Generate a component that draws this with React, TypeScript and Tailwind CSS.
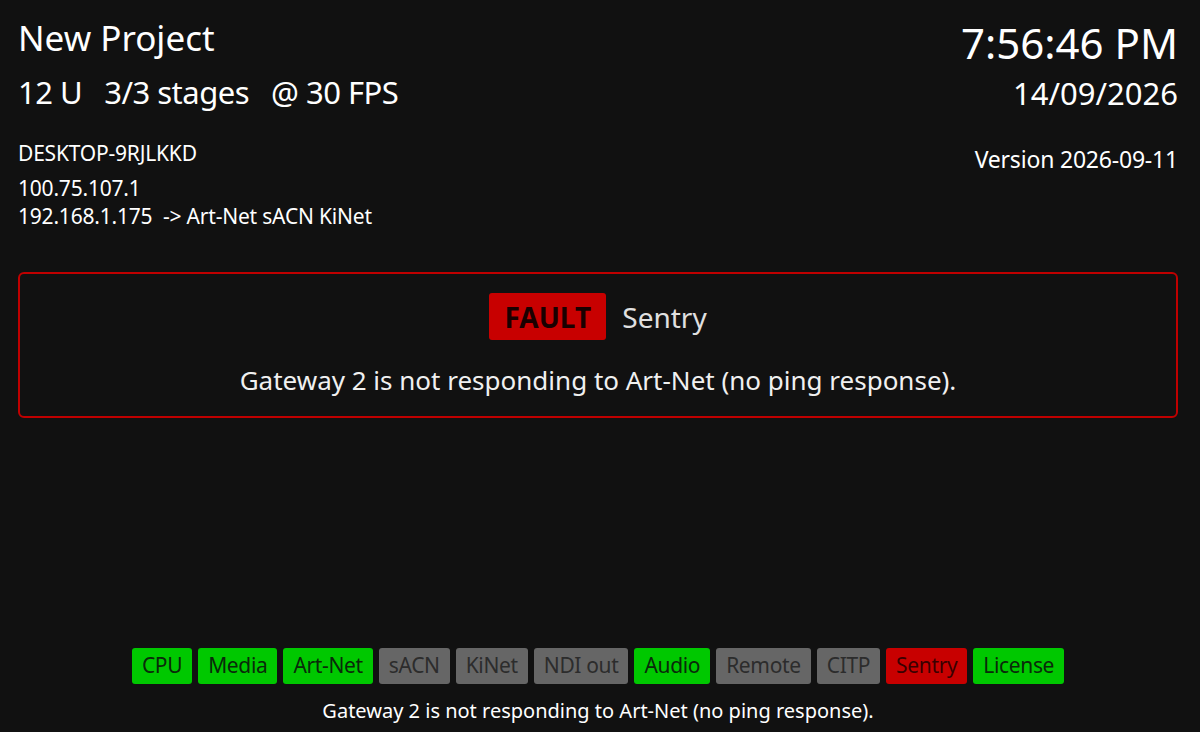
const badges: { label: string; state: 'ok' | 'off' | 'fault' }[] = [
  { label: 'CPU', state: 'ok' },
  { label: 'Media', state: 'ok' },
  { label: 'Art-Net', state: 'ok' },
  { label: 'sACN', state: 'off' },
  { label: 'KiNet', state: 'off' },
  { label: 'NDI out', state: 'off' },
  { label: 'Audio', state: 'ok' },
  { label: 'Remote', state: 'off' },
  { label: 'CITP', state: 'off' },
  { label: 'Sentry', state: 'fault' },
  { label: 'License', state: 'ok' },
];

const stateClass = {
  ok: 'bg-[#00c800] text-[#0a2a0a]',
  off: 'bg-[#666666] text-[#2c2c2c]',
  fault: 'bg-[#c80000] text-[#3a0000]',
};

export default function App() {
  return (
    <div
      className="flex h-[732px] w-full flex-col bg-[#111111] pl-[18px] pr-[22px] text-white"
      style={{ fontFamily: '"Noto Sans", "Open Sans", sans-serif' }}
    >
      <header className="flex justify-between pt-[14px]">
        <div className="flex flex-col">
          <h1 className="text-[35px] leading-[48px]">New Project</h1>
          <div className="mt-[10px] flex gap-[22px] text-[31px] leading-[40px] tracking-[-0.5px]">
            <span>12 U</span>
            <span>3/3 stages</span>
            <span>@ 30 FPS</span>
          </div>
          <div className="mt-[27px] text-[21px] leading-[28px] tracking-[-0.2px]">DESKTOP-9RJLKKD</div>
          <div className="mt-[7px] text-[21px] leading-[28px] tracking-[-0.2px]">
            <div>100.75.107.1</div>
            <div>192.168.1.175&nbsp;&nbsp;-&gt; Art-Net sACN KiNet</div>
          </div>
        </div>
        <div className="flex flex-col items-end pt-[1px]">
          <div className="text-[42px] leading-[56px]">7:56:46 PM</div>
          <div className="mt-[2px] text-[31px] leading-[40px]">14/09/2026</div>
          <div className="mt-[31px] text-[23px] leading-[30px] tracking-[-0.2px]">Version 2026-09-11</div>
        </div>
      </header>

      <section className="mt-[42px] flex flex-col items-center rounded-[6px] border-2 border-[#c00000] pt-[19px] pb-[18px]">
        <div className="flex items-center gap-[16px]">
          <span className="flex h-[47px] w-[117px] items-center justify-center rounded-[3px] bg-[#c80000] text-[28px] font-bold text-[#1a0000]">
            FAULT
          </span>
          <span className="text-[28px] text-[#e0e0e0]">Sentry</span>
        </div>
        <p className="mt-[22px] text-[26px] leading-[36px] text-[#f0f0f0]">
          Gateway 2 is not responding to Art-Net (no ping response).
        </p>
      </section>

      <div className="flex-1" />

      <footer className="flex flex-col items-center pb-[8px]">
        <div className="flex gap-[6px]">
          {badges.map((b) => (
            <span
              key={b.label}
              className={`flex h-[36px] items-center rounded-[3px] px-[10px] text-[21px] tracking-[-0.35px] ${stateClass[b.state]}`}
            >
              {b.label}
            </span>
          ))}
        </div>
        <p className="mt-[14px] text-[20px] leading-[26px]">
          Gateway 2 is not responding to Art-Net (no ping response).
        </p>
      </footer>
    </div>
  );
}
